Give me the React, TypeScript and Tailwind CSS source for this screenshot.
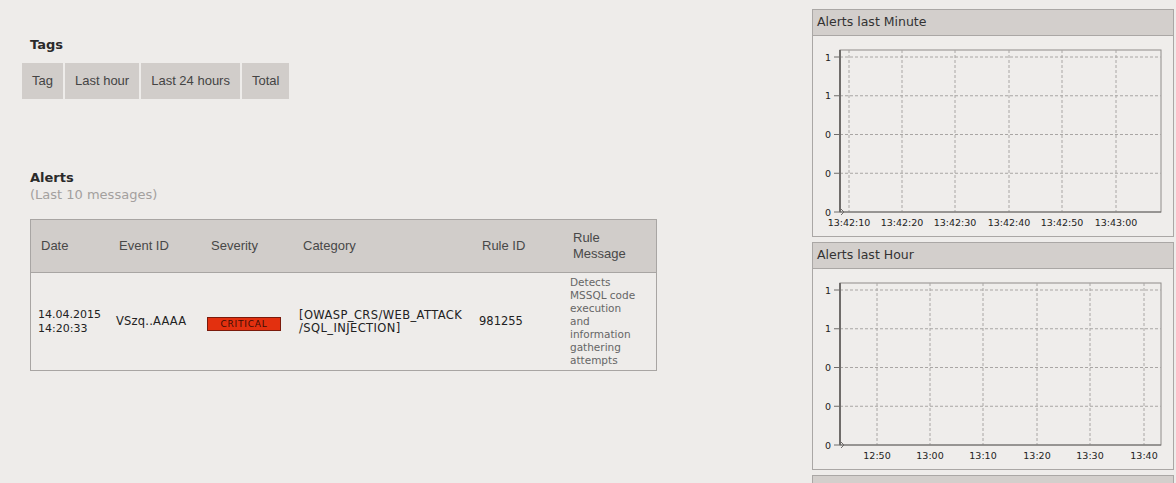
import React from 'react';

const yLabels = ['1', '1', '0', '0', '0'];

function Chart({ ticks, xs }: { ticks: string[]; xs: number[] }) {
  const top = 14;
  const bottom = 176;
  const left = 27;
  const right = 348;
  const step = (bottom - top - 7) / 4;
  const ys = [0, 1, 2, 3, 4].map((i) => top + 7 + i * step);

  return (
    <svg width="360" height="200" className="block">
      <rect x={left} y={top} width={right - left} height={bottom - top} fill="none" stroke="#8f8c8a" strokeWidth="1" />
      {ys.slice(0, 4).map((y) => (
        <line key={y} x1={left} x2={right} y1={y} y2={y} stroke="#a9a6a4" strokeDasharray="3 2" strokeWidth="1" />
      ))}
      {xs.map((x) => (
        <line key={x} x1={x} x2={x} y1={top} y2={bottom} stroke="#a9a6a4" strokeDasharray="3 2" strokeWidth="1" />
      ))}
      {ys.map((y, i) => (
        <g key={i}>
          <line x1={21} x2={left} y1={y} y2={y} stroke="#6f6c6a" strokeWidth="1" />
          <text x={18} y={y + 3.5} textAnchor="end" fontSize="9.5" fontFamily="'DejaVu Sans', sans-serif" fill="#222">
            {yLabels[i]}
          </text>
        </g>
      ))}
      <line x1={left} x2={left} y1={top} y2={bottom} stroke="#6f6c6a" strokeWidth="2" />
      <line x1={left} x2={right} y1={bottom} y2={bottom} stroke="#6f6c6a" strokeWidth="1" />
      <path d={`M${left + 1} ${bottom - 3} L${left + 4} ${bottom} L${left + 1} ${bottom + 3}`} fill="none" stroke="#6f6c6a" strokeWidth="1" />
      {xs.map((x, i) => (
        <text key={x} x={x} y={bottom + 14} textAnchor="middle" fontSize="9.5" fontFamily="'DejaVu Sans', sans-serif" fill="#222">
          {ticks[i]}
        </text>
      ))}
    </svg>
  );
}

function Panel({ title, children }: { title: string; children?: React.ReactNode }) {
  return (
    <div className="border border-[#aaa7a5] bg-[#efedeb]">
      <div className="h-[26px] bg-[#d3cfcc] border-b border-[#aaa7a5] pl-[4px] flex items-center text-[12.5px] text-[#333] font-['DejaVu_Sans',sans-serif]">
        {title}
      </div>
      {children}
    </div>
  );
}

const cols = 'grid grid-cols-[78px_92px_92px_179px_91px_93px]';

export default function App() {
  return (
    <div className="w-[1176px] h-[483px] overflow-hidden bg-[#eeecea] flex font-['Liberation_Sans',sans-serif]">
      {/* left side */}
      <div className="w-[812px] pt-[37px]">
        <h3 className="pl-[30px] text-[13px] leading-[16px] font-bold text-[#2a2a2a] font-['DejaVu_Sans',sans-serif]">Tags</h3>
        <div className="flex gap-[2px] ml-[22px] mt-[10px]">
          {['Tag', 'Last hour', 'Last 24 hours', 'Total'].map((t) => (
            <div key={t} className="h-[36px] px-[10px] flex items-center bg-[#d1cdca] text-[13px] text-[#444]">
              {t}
            </div>
          ))}
        </div>

        <div className="pl-[30px] mt-[71px]">
          <h3 className="text-[13px] leading-[16px] font-bold text-[#2a2a2a] font-['DejaVu_Sans',sans-serif]">Alerts</h3>
          <p className="text-[13px] leading-[16px] mt-[1px] text-[#a3a09e] font-['DejaVu_Sans',sans-serif]">(Last 10 messages)</p>

          <div className="mt-[16px] w-[627px] border border-[#a8a5a3]">
            <div className={`${cols} h-[53px] bg-[#d1cdca] border-b border-[#a8a5a3] text-[13px] leading-[16px] text-[#484848] items-center`}>
              <div className="pl-[10px]">Date</div>
              <div className="pl-[10px]">Event ID</div>
              <div className="pl-[10px]">Severity</div>
              <div className="pl-[10px]">Category</div>
              <div className="pl-[10px]">Rule ID</div>
              <div className="pl-[10px]">Rule<br />Message</div>
            </div>
            <div className={`${cols} h-[97px] items-center text-[#222] font-['DejaVu_Sans',sans-serif]`}>
              <div className="pl-[7px] text-[11px] leading-[14px]">14.04.2015<br />14:20:33</div>
              <div className="pl-[7px] text-[11.5px] tracking-[0.2px]">VSzq..AAAA</div>
              <div className="pl-[6px]">
                <span className="inline-flex items-center justify-center w-[74px] h-[14px] bg-[#e3300f] border border-[#7a1a0c] text-[9px] tracking-[0.8px] text-[#3a0d05]">
                  CRITICAL
                </span>
              </div>
              <div className="pl-[6px] text-[11.5px] leading-[13px] tracking-[0.4px]">[OWASP_CRS/WEB_ATTACK<br />/SQL_INJECTION]</div>
              <div className="pl-[7px] text-[11.5px]">981255</div>
              <div className="pl-[7px] pr-[12px] text-[10.5px] leading-[13px] text-[#666]">
                Detects MSSQL code execution and information gathering attempts
              </div>
            </div>
          </div>
        </div>
      </div>

      {/* right side */}
      <div className="w-[362px] pt-[9px] flex flex-col gap-[5px]">
        <Panel title="Alerts last Minute">
          <Chart
            ticks={['13:42:10', '13:42:20', '13:42:30', '13:42:40', '13:42:50', '13:43:00']}
            xs={[36, 89, 142, 196, 249, 303]}
          />
        </Panel>
        <Panel title="Alerts last Hour">
          <Chart
            ticks={['12:50', '13:00', '13:10', '13:20', '13:30', '13:40']}
            xs={[64, 117, 170, 224, 277, 331]}
          />
        </Panel>
        <Panel title="" />
      </div>
    </div>
  );
}
